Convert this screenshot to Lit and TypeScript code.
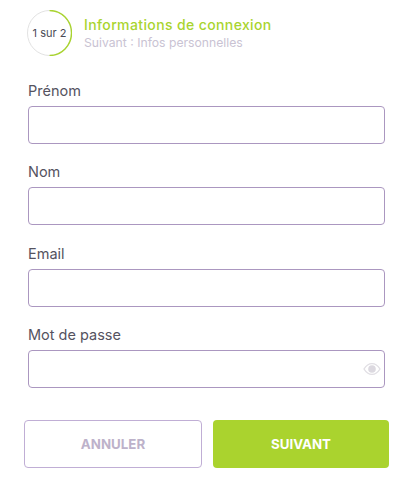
import { LitElement, html, css } from "lit";
import { customElement } from "lit/decorators.js";

@customElement("app-root")
export class AppRoot extends LitElement {
  static styles = css`
    :host { display: block; width: 413px; height: 494px; background: #fff; font-family: Inter, "Noto Sans", sans-serif; box-sizing: border-box; padding: 10px 24px 0; overflow: hidden; }
    .head { display: flex; align-items: center; gap: 12px; padding-left: 3px; height: 46px; }
    .ring { position: relative; width: 45px; height: 46px; flex: none; }
    .ring svg { display: block; }
    .ring span { position: absolute; inset: 0; display: flex; align-items: center; justify-content: center; font-size: 11px; color: #4a4a55; }
    .titles { display: flex; flex-direction: column; gap: 1px; }
    .t1 { font-size: 14px; line-height: 18px; font-weight: 500; color: #a9d42f; letter-spacing: .38px; }
    .t2 { font-size: 12.2px; line-height: 16px; color: #c9c3d3; }
    .fields { margin: 25px 0 0 4px; width: 357px; display: flex; flex-direction: column; gap: 18.25px; }
    .field { display: flex; flex-direction: column; gap: 5px; }
    label { font-size: 14.5px; line-height: 20px; color: #55535f; height: 20px; }
    .box { position: relative; height: 38px; box-sizing: border-box; border: 1.5px solid #ab97c0; border-radius: 4px; background: #fff; }
    .box svg { position: absolute; right: 3.5px; top: 11px; }
    .actions { display: flex; gap: 11px; margin-top: 32.5px; width: 365px; }
    .btn { flex: 1; height: 48px; box-sizing: border-box; border-radius: 4px; display: flex; align-items: center; justify-content: center; font-size: 13.3px; font-weight: 700; }
    .ghost { border: 1.5px solid #c0aed5; color: #bdb2ca; background: #fff; }
    .solid { background: #aad32e; color: #fff; }
  `;

  render() {
    const field = (name: string, eye = false) => html`
      <div class="field">
        <label>${name}</label>
        <div class="box">
          ${eye ? html`<svg width="18" height="14" viewBox="0 0 18 14">
            <path d="M1 7C3.2 3.4 5.8 1.6 9 1.6S14.8 3.4 17 7C14.8 10.6 12.2 12.4 9 12.4S3.2 10.6 1 7Z" fill="none" stroke="#e1dfe4" stroke-width="1.4"/>
            <circle cx="9" cy="7" r="3.8" fill="#dcd9e0"/>
          </svg>` : ""}
        </div>
      </div>`;
    return html`
      <div class="head">
        <div class="ring">
          <svg width="45" height="46" viewBox="0 0 45 46">
            <ellipse cx="22.5" cy="23" rx="22" ry="22.5" fill="none" stroke="#e2e2e2" stroke-width="1"/>
            <path d="M22.5 .5A22 22.5 0 0 1 22.5 45.5" fill="none" stroke="#a9d42f" stroke-width="1.4"/>
          </svg>
          <span>1 sur 2</span>
        </div>
        <div class="titles">
          <div class="t1">Informations de connexion</div>
          <div class="t2">Suivant : Infos personnelles</div>
        </div>
      </div>
      <div class="fields">
        ${field("Prénom")}
        ${field("Nom")}
        ${field("Email")}
        ${field("Mot de passe", true)}
      </div>
      <div class="actions">
        <div class="btn ghost">ANNULER</div>
        <div class="btn solid">SUIVANT</div>
      </div>
    `;
  }
}
